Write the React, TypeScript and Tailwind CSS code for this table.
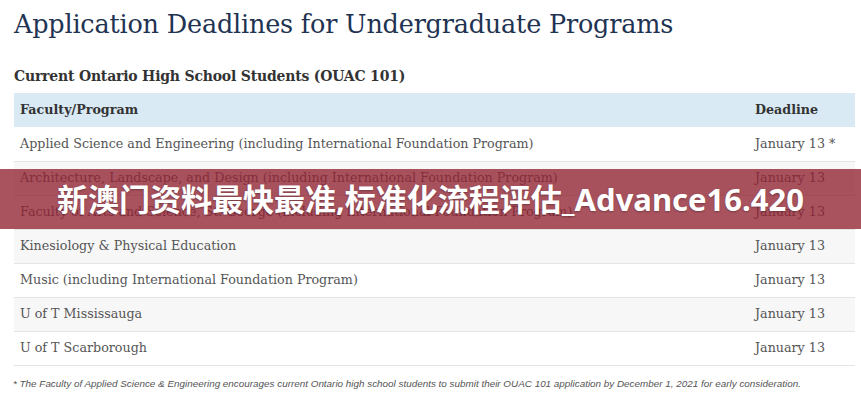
import React from "react";

const rows = [
  { name: "Applied Science and Engineering (including International Foundation Program)", date: "January 13 *" },
  { name: "Architecture, Landscape, and Design (including International Foundation Program)", date: "January 13" },
  { name: "Faculty of Arts and Science, St. George (including International Foundation Program)", date: "January 13" },
  { name: "Kinesiology & Physical Education", date: "January 13" },
  { name: "Music (including International Foundation Program)", date: "January 13" },
  { name: "U of T Mississauga", date: "January 13" },
  { name: "U of T Scarborough", date: "January 13" },
];

export default function App() {
  return (
    <div className="relative w-[861px] h-[400px] bg-white overflow-hidden">
      <div className="px-[14px] pr-[6px] pt-[4px]">
        <h1 className="text-[25.5px] leading-[40px] text-[#1f3352] font-['DejaVu_Serif',serif] tracking-[-0.2px]">
          Application Deadlines for Undergraduate Programs
        </h1>
        <h2 className="mt-[22px] text-[14px] leading-[20px] font-bold text-[#333] font-['DejaVu_Serif',serif] tracking-[-0.2px]">
          Current Ontario High School Students (OUAC 101)
        </h2>
        <table className="mt-[7px] w-full border-collapse font-['DejaVu_Serif',serif] text-[12.7px] text-[#555]">
          <thead>
            <tr className="bg-[#d9eaf5] h-[34px] text-[#333]">
              <th className="text-left font-bold pl-[6px]">Faculty/Program</th>
              <th className="text-left font-bold w-[100px]">Deadline</th>
            </tr>
          </thead>
          <tbody>
            {rows.map((r, i) => (
              <tr key={i} className={`h-[34px] border-b border-[#e4e4e4] ${i % 2 === 1 ? "bg-[#f7f7f7]" : "bg-white"}`}>
                <td className="pl-[6px]">{r.name}</td>
                <td>{r.date}</td>
              </tr>
            ))}
          </tbody>
        </table>
        <p className="mt-[11px] -ml-[1px] text-[9.9px] italic text-[#555] font-['Liberation_Sans',Arial,sans-serif]">
          * The Faculty of Applied Science &amp; Engineering encourages current Ontario high school students to submit their OUAC 101 application by December 1, 2021 for early consideration.
        </p>
      </div>
      <div className="absolute left-0 right-0 top-[169px] h-[60px] bg-[rgba(145,35,50,0.78)] flex items-center justify-center">
        <span className="text-white text-[31px] font-bold font-['Noto_Sans','Noto_Sans_CJK_SC',sans-serif] [text-shadow:0_1px_2px_rgba(0,0,0,0.3)]">
          新澳门资料最快最准,标准化流程评估_Advance16.420
        </span>
      </div>
    </div>
  );
}
